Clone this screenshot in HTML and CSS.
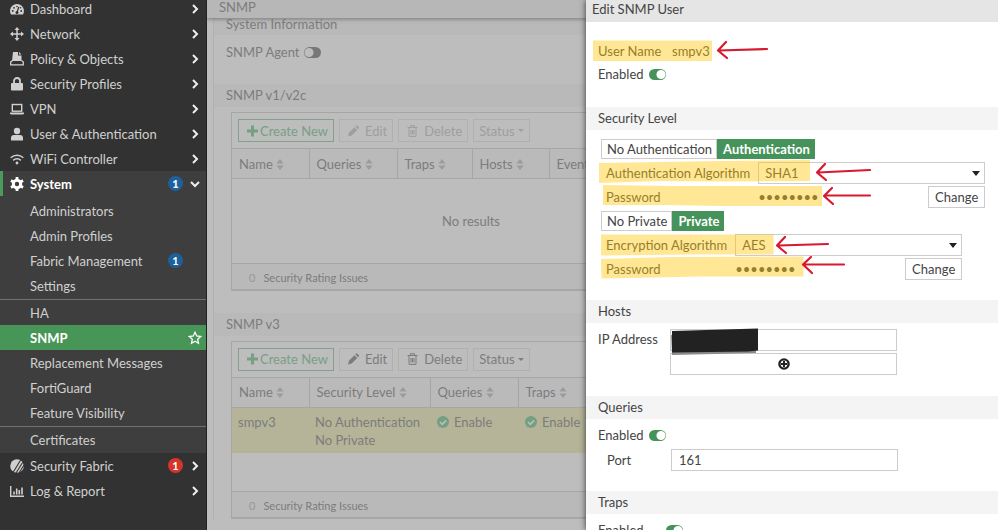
FILE: index.html
```html
<!DOCTYPE html>
<html lang="en">
<head>
  <meta charset="UTF-8" />
  <meta name="viewport" content="width=device-width, initial-scale=1.0" />
  <title>SNMP - Edit SNMP User</title>
  <link rel="stylesheet" href="styles.css">
</head>
<body>
  <!-- Shared icons -->
  <svg class="defs" aria-hidden="true">
    <symbol id="chevron" viewBox="0 0 8 10"><path d="M2 1l4 4-4 4" fill="none" stroke="currentColor" stroke-width="2"/></symbol>
    <symbol id="sort" viewBox="0 0 8 12"><path d="M4 0l4 5H0zM4 12L0 7h8z" fill="currentColor"/></symbol>
    <symbol id="plus" viewBox="0 0 11 11"><path d="M4 0h3v4h4v3H7v4H4V7H0V4h4z" fill="currentColor"/></symbol>
    <symbol id="pencil" viewBox="0 0 12 12"><path d="M0 12l1-4 6-6 3 3-6 6zM8 1l1-1h1l2 2v1l-1 1z" fill="currentColor"/></symbol>
    <symbol id="trash" viewBox="0 0 10 12"><path d="M0 2.5h10M3 2.500V.7h4v1.800M1.500 3v8.400h7V3M3.500 5v4.500M5 5v4.500M6.500 5v4.500" fill="none" stroke="currentColor"/></symbol>
    <symbol id="check" viewBox="0 0 12 12"><circle cx="6" cy="6" r="6" fill="currentColor"/><path d="M3 6l2.300 2.300L9.200 4.300" fill="none" stroke="#bcbcbc" stroke-width="1.700"/></symbol>
  </svg>

  <div class="app">
    <!-- Sidebar -->
    <nav class="sidebar">
      <ul class="menu">
        <li><a href="#" class="item">
          <svg class="icon" viewBox="0 0 14 14"><path d="M7 2a7 7 0 0 0-6 10.500h12A7 7 0 0 0 7 2z" fill="currentColor"/><g fill="#323232"><circle cx="2.800" cy="9" r=".9"/><circle cx="4" cy="5.800" r=".9"/><circle cx="11.200" cy="9" r=".9"/><circle cx="10.500" cy="5.800" r=".8"/><circle cx="7" cy="4.500" r=".8"/><circle cx="7" cy="10.500" r="1.500"/></g><path d="M7 10.500L8.800 5" stroke="#323232" stroke-width="1.200"/></svg>
          <span>Dashboard</span><svg class="arrow"><use href="#chevron"/></svg></a></li>
        <li><a href="#" class="item">
          <svg class="icon" viewBox="0 0 14 14"><path d="M7 1v12M1 7h12" stroke="currentColor" stroke-width="1.500"/><path d="M7 0l2.500 3h-5zM7 14l-2.500-3h5zM0 7l3-2.500v5zM14 7l-3 2.500v-5z" fill="currentColor"/></svg>
          <span>Network</span><svg class="arrow"><use href="#chevron"/></svg></a></li>
        <li><a href="#" class="item">
          <svg class="icon" viewBox="0 0 14 14"><path d="M3 0h5v3.500h3.500V9H2z" fill="currentColor"/><path d="M9 0l2.500 2.500H9z" fill="currentColor"/><path d="M2.500 8.500L.7 10v2.800h12.600V10l-1.800-1.500" fill="none" stroke="currentColor" stroke-width="1.300"/></svg>
          <span>Policy &amp; Objects</span><svg class="arrow"><use href="#chevron"/></svg></a></li>
        <li><a href="#" class="item">
          <svg class="icon" viewBox="0 0 14 14"><rect x="1" y="6" width="12" height="7.500" rx="1" fill="currentColor"/><path d="M4 6.500V4a3 3 0 0 1 6 0v2.500" fill="none" stroke="currentColor" stroke-width="1.800"/></svg>
          <span>Security Profiles</span><svg class="arrow"><use href="#chevron"/></svg></a></li>
        <li><a href="#" class="item">
          <svg class="icon" viewBox="0 0 14 14"><rect x="2.300" y="2.500" width="9.400" height="6.700" fill="none" stroke="currentColor" stroke-width="1.400"/><path d="M0 10.500h14v1l-1 1H1l-1-1z" fill="currentColor"/></svg>
          <span>VPN</span><svg class="arrow"><use href="#chevron"/></svg></a></li>
        <li><a href="#" class="item">
          <svg class="icon" viewBox="0 0 14 14"><circle cx="7" cy="4" r="3.200" fill="currentColor"/><path d="M1 13.500V11a3 3 0 0 1 3-3h6a3 3 0 0 1 3 3v2.500z" fill="currentColor"/></svg>
          <span>User &amp; Authentication</span><svg class="arrow"><use href="#chevron"/></svg></a></li>
        <li><a href="#" class="item">
          <svg class="icon" viewBox="0 0 14 14"><path d="M.7 5.800a9 9 0 0 1 12.600 0M3.200 8.400a5.400 5.400 0 0 1 7.600 0" fill="none" stroke="currentColor" stroke-width="1.500"/><circle cx="7" cy="11" r="1.400" fill="currentColor"/></svg>
          <span>WiFi Controller</span><svg class="arrow"><use href="#chevron"/></svg></a></li>
        <li class="open"><a href="#" class="item current">
          <svg class="icon" viewBox="0 0 14 14"><circle cx="7" cy="7" r="3.700" fill="none" stroke="currentColor" stroke-width="3"/><path d="M7 0v3M7 11v3M1 3.500l2.500 1.500M10.500 9l2.500 1.500M1 10.500L3.500 9M10.500 5L13 3.500" stroke="currentColor" stroke-width="2.800"/></svg>
          <span>System</span><b class="count">1</b><svg class="arrow down"><use href="#chevron"/></svg></a>
          <ul class="submenu">
            <li><a href="#" class="item">Administrators</a></li>
            <li><a href="#" class="item">Admin Profiles</a></li>
            <li><a href="#" class="item"><span>Fabric Management</span><b class="count">1</b><i class="arrow"></i></a></li>
            <li><a href="#" class="item">Settings</a></li>
            <li class="divided"><a href="#" class="item">HA</a></li>
            <li><a href="#" class="item active"><span>SNMP</span>
              <svg class="star" viewBox="0 0 14 14"><path d="M7 1.300l1.700 3.700 4 .5-3 2.700.8 4L7 10.200l-3.500 2 .8-4-3-2.700 4-.5z" fill="none" stroke="currentColor" stroke-width="1.300"/></svg></a></li>
            <li><a href="#" class="item">Replacement Messages</a></li>
            <li><a href="#" class="item">FortiGuard</a></li>
            <li><a href="#" class="item">Feature Visibility</a></li>
            <li class="divided"><a href="#" class="item">Certificates</a></li>
          </ul>
        </li>
        <li><a href="#" class="item">
          <svg class="icon" viewBox="0 0 14 14"><circle cx="7" cy="7" r="6.800" fill="currentColor"/><path d="M3 13.500L11 .5M6 14L13.500 2M9 14l5-8" stroke="#323232" stroke-width="1.100"/></svg>
          <span>Security Fabric</span><b class="count red">1</b><svg class="arrow"><use href="#chevron"/></svg></a></li>
        <li><a href="#" class="item">
          <svg class="icon" viewBox="0 0 14 14"><path d="M.7 2v10.300H14" fill="none" stroke="currentColor" stroke-width="1.400"/><path d="M4 10.500v-3M6.700 10.500v-6M9.300 10.500V6M12 10.500v-7" stroke="currentColor" stroke-width="1.600"/></svg>
          <span>Log &amp; Report</span><svg class="arrow"><use href="#chevron"/></svg></a></li>
      </ul>
    </nav>

    <!-- SNMP page, dimmed while the drawer is open -->
    <main class="page">
      <h1 class="page-title">SNMP</h1>
      <div class="page-body">
        <h2 class="band first">System Information</h2>
        <div class="agent">
          <label for="agent">SNMP Agent</label>
          <input type="checkbox" class="toggle" id="agent">
        </div>

        <h2 class="band">SNMP v1/v2c</h2>
        <div class="grid-box">
          <div class="toolbar">
            <button class="create"><svg><use href="#plus"/></svg>Create New</button>
            <button disabled><svg><use href="#pencil"/></svg>Edit</button>
            <button disabled><svg><use href="#trash"/></svg>Delete</button>
            <button class="status" disabled>Status</button>
          </div>
          <table>
            <colgroup><col class="c-name"><col class="c-queries"><col class="c-traps"><col class="c-name"><col></colgroup>
            <thead>
              <tr>
                <th>Name <svg><use href="#sort"/></svg></th>
                <th>Queries <svg><use href="#sort"/></svg></th>
                <th>Traps <svg><use href="#sort"/></svg></th>
                <th>Hosts <svg><use href="#sort"/></svg></th>
                <th>Events <svg><use href="#sort"/></svg></th>
              </tr>
            </thead>
            <tbody><tr><td colspan="5" class="empty">No results</td></tr></tbody>
          </table>
          <div class="rating"><span>0</span>Security Rating Issues</div>
        </div>

        <h2 class="band">SNMP v3</h2>
        <div class="grid-box">
          <div class="toolbar">
            <button class="create"><svg><use href="#plus"/></svg>Create New</button>
            <button><svg><use href="#pencil"/></svg>Edit</button>
            <button><svg><use href="#trash"/></svg>Delete</button>
            <button class="status">Status</button>
          </div>
          <table class="users">
            <colgroup><col class="c-name"><col class="c-level"><col class="c-queries"><col></colgroup>
            <thead>
              <tr>
                <th>Name <svg><use href="#sort"/></svg></th>
                <th>Security Level <svg><use href="#sort"/></svg></th>
                <th>Queries <svg><use href="#sort"/></svg></th>
                <th>Traps <svg><use href="#sort"/></svg></th>
              </tr>
            </thead>
            <tbody>
              <tr class="selected">
                <td>smpv3</td>
                <td>No Authentication<br>No Private</td>
                <td><svg><use href="#check"/></svg>Enable</td>
                <td><svg><use href="#check"/></svg>Enable</td>
              </tr>
            </tbody>
          </table>
          <div class="rating"><span>0</span>Security Rating Issues</div>
        </div>
      </div>
    </main>

    <!-- Edit drawer -->
    <aside class="drawer">
      <h2 class="drawer-title">Edit SNMP User</h2>
      <form>
        <div class="rows user">
          <div class="row"><span class="name">User Name</span><span>smpv3</span></div>
          <div class="row">
            <label for="enabled">Enabled</label>
            <input type="checkbox" class="toggle" id="enabled" checked>
          </div>
        </div>

        <h3>Security Level</h3>
        <div class="security">
          <div class="switch">
            <button type="button">No Authentication</button><button type="button" class="on">Authentication</button>
          </div>
          <div class="fields">
            <label for="auth">Authentication Algorithm</label>
            <span class="select"><select id="auth"><option>SHA1</option></select></span>
            <label for="authPass">Password</label>
            <span class="secret"><input type="password" id="authPass" value="password" readonly><button type="button">Change</button></span>
          </div>
          <div class="switch">
            <button type="button">No Private</button><button type="button" class="on">Private</button>
          </div>
          <div class="fields">
            <label for="enc">Encryption Algorithm</label>
            <span class="select"><select id="enc"><option>AES</option></select></span>
            <label for="encPass">Password</label>
            <span class="secret"><input type="password" id="encPass" value="password" readonly><button type="button">Change</button></span>
          </div>
        </div>

        <h3>Hosts</h3>
        <div class="hosts">
          <label for="ip">IP Address</label>
          <div class="host-list">
            <input type="text" class="text" id="ip">
            <button type="button" aria-label="Add host">
              <svg viewBox="0 0 12 12"><circle cx="6" cy="6" r="4.600" fill="none" stroke="currentColor" stroke-width="2.400"/><path d="M6 3v6M3 6h6" stroke="currentColor" stroke-width="2"/></svg>
            </button>
          </div>
        </div>

        <h3>Queries</h3>
        <div class="rows queries">
          <div class="row">
            <label for="queries">Enabled</label>
            <input type="checkbox" class="toggle" id="queries" checked>
          </div>
          <div class="row port">
            <label for="port">Port</label>
            <input type="text" class="text" id="port" value="161">
          </div>
        </div>

        <h3>Traps</h3>
        <div class="rows traps">
          <div class="row">
            <label for="traps">Enabled</label>
            <input type="checkbox" class="toggle" id="traps" checked>
          </div>
        </div>
      </form>

      <!-- Marker strokes and arrows -->
      <svg class="notes" width="412" height="530" viewBox="586 0 412 530" aria-hidden="true">
        <g fill="#fec80e" fill-opacity=".44">
          <path d="M593 40.500h119v20.500H593z"/>
          <path d="M599 163l60-1 60-1 91-1v21l-91 .5-60-.5-60 2z"/>
          <path d="M603 185l70 1 149 0v20l-100 0-60-1-59 0z"/>
          <path d="M601 234.500h172.500v20l-80 0-92.500 1z"/>
          <path d="M601 259l70-2 132.500-.5v20l-100 0-102 2z"/>
        </g>
        <g fill="none" stroke="#d8192f" stroke-width="2.200" stroke-linecap="round" stroke-linejoin="round">
          <path d="M767 49l-48 1.500M726 42l-8 8.500 9 7.500"/>
          <path d="M870 170l-52 2.500M825 164l-8 8.500 9 7.500"/>
          <path d="M870 195.500h-45M832 188l-8 8 9 8"/>
          <path d="M828 244l-49 1.500M785 237l-8 8.500 9 7.500"/>
          <path d="M844 264.500h-40M811 257l-8 7.500 9 8.500"/>
        </g>
        <path d="M671 335h2v17l83-2v3l-84 2z" fill="#8c8a8c"/>
        <path d="M672 331l86-2.500v22l-10 1-76 1z" fill="#222"/>
      </svg>
    </aside>
  </div>
</body>
</html>
```

FILE: styles.css
```css
* {
  box-sizing: border-box;
}

body {
  font-family: Lato, "Liberation Sans", sans-serif;
  font-size: 13px;
  line-height: 18px;
  margin: 0;
  color: #444;
}

h1, h2, h3 {
  font-size: 13px;
  font-weight: normal;
  margin: 0;
}

ul {
  list-style: none;
  margin: 0;
  padding: 0;
}

button, input, select {
  font: inherit;
  color: inherit;
  margin: 0;
}

button {
  cursor: pointer;
}

label {
  white-space: nowrap;
}

.defs {
  display: none;
}

.app {
  position: relative;
  display: flex;
  height: 100vh;
  overflow: hidden;
}

/* Sidebar */
.sidebar {
  flex: 0 0 207px;
  background: #323232;
  color: #d0d0d0;
  border-right: 1px solid #222;
}

.menu {
  margin-top: -4px;
}

.item {
  display: flex;
  align-items: center;
  height: 25px;
  padding: 0 7px 0 10px;
  color: inherit;
  text-decoration: none;
}

.item span {
  flex: 1;
}

.icon {
  width: 14px;
  height: 14px;
  margin-right: 6px;
}

.arrow {
  width: 8px;
  height: 10px;
  margin-left: 8px;
  color: #eee;
}

.arrow.down {
  transform: rotate(90deg);
}

.open {
  background: #3e3e3e;
}

.current {
  color: #fff;
  font-weight: bold;
  border-left: 3px solid #4a9a5b;
  padding-left: 7px;
}

.count {
  width: 15px;
  height: 15px;
  border-radius: 50%;
  background: #1c609c;
  color: #fff;
  font-size: 11px;
  line-height: 15px;
  text-align: center;
}

.count.red {
  background: #d6352b;
}

.submenu {
  padding: 2px 0 1px;
}

.submenu .item {
  padding-left: 30px;
}

.submenu .divided {
  border-top: 1px solid #707070;
  margin-top: 1px;
}

.submenu .active {
  background: #489558;
  color: #fff;
  font-weight: bold;
  padding-right: 4px;
}

.star {
  width: 14px;
  height: 14px;
}

/* Dimmed page */
.page {
  flex: 1;
  min-width: 0;
  background: #bdbdbd;
  color: #7c7c7c;
  overflow: hidden;
}

.page-title {
  position: relative;
  height: 18px;
  line-height: 14px;
  padding-left: 12px;
  background: #b7b7b7;
  box-shadow: 0 1px 4px #777;
}

.page-body {
  margin-left: 6px;
  border-left: 1px solid #b0b0b0;
}

.band {
  height: 23px;
  line-height: 23px;
  padding-left: 12px;
  background: #b9b9b9;
}

.band.first {
  height: 17px;
  line-height: 13px;
}

.agent {
  display: flex;
  align-items: center;
  gap: 4px;
  padding: 8px 12px 23px;
}

.toggle {
  appearance: none;
  width: 17px;
  height: 11px;
  border-radius: 6px;
  background: radial-gradient(circle at 5px 50%, #bdbdbd 4px, #777 5px);
}

.toggle:checked {
  background: radial-gradient(circle at 12px 50%, #fff 4px, #45935a 5px);
}

.grid-box {
  width: 480px;
  margin: 5px 0 22px 17px;
  border: 1px solid #a6a6a6;
  border-bottom-width: 2px;
}

.toolbar {
  display: flex;
  gap: 5px;
  padding: 6px;
}

.toolbar button {
  display: flex;
  align-items: center;
  gap: 6px;
  height: 23px;
  padding: 0 5px 0 8px;
  border: 1px solid #b0b0b0;
  background: none;
}

.toolbar button:disabled {
  color: #9e9e9e;
}

.toolbar svg {
  width: 11px;
  height: 12px;
}

.toolbar .create {
  gap: 2px;
  color: #76a083;
  border-color: #83a08b;
}

.toolbar .status {
  gap: 3px;
  padding: 0 5px;
}

.status::after {
  content: "";
  border: 3px solid transparent;
  border-top-color: currentColor;
  border-bottom: 0;
}

table {
  width: 100%;
  table-layout: fixed;
  border-collapse: collapse;
}

.c-name {
  width: 77px;
}

.c-queries {
  width: 88px;
}

.c-traps {
  width: 75px;
}

.c-level {
  width: 121px;
}

th {
  height: 30px;
  padding: 0 7px;
  font-weight: normal;
  text-align: left;
  white-space: nowrap;
  border: 1px solid #a6a6a6;
  border-width: 1px 0 1px 1px;
  background: #bababa;
}

th:first-child {
  border-left: 0;
}

th svg {
  width: 8px;
  height: 11px;
  vertical-align: -1px;
  color: #9c9c9c;
}

td {
  padding: 5px 6px 4px;
  vertical-align: top;
}

td svg {
  width: 12px;
  height: 12px;
  margin: 0 5px 0 1px;
  vertical-align: -1px;
  color: #73a083;
}

.empty {
  height: 84px;
  text-align: center;
  vertical-align: middle;
}

.selected {
  background: #b5b498;
}

.users {
  margin-bottom: 38px;
}

.rating {
  height: 26px;
  line-height: 27px;
  padding-left: 17px;
  font-size: 11px;
  border-top: 1px solid #a6a6a6;
  background: #b9b9b9;
}

.rating span {
  margin-right: 8px;
  color: #989898;
}

/* Drawer over the page */
.drawer {
  position: absolute;
  top: 0;
  right: 0;
  bottom: 0;
  left: 586px;
  overflow: hidden;
  background: #fff;
  box-shadow: 0 0 6px #333;
}

.drawer-title {
  height: 22px;
  line-height: 18px;
  padding-left: 6px;
  background: #e5e5e5;
}

.drawer h3 {
  height: 23px;
  line-height: 23px;
  padding-left: 12px;
  background: #f4f4f4;
}

.rows {
  display: flex;
  flex-direction: column;
  gap: 5px;
}

.row {
  display: flex;
  align-items: center;
  gap: 5px;
}

.user {
  padding: 20px 12px 24px;
}

.user .name {
  width: 69px;
}

.security {
  display: flex;
  flex-direction: column;
  gap: 3px;
  padding: 9px 12px 20px 15px;
}

.switch {
  display: flex;
}

.switch button {
  height: 20px;
  line-height: 18px;
  padding: 0 4px 0 5px;
  border: 1px solid #ccc;
  background: #fff;
}

.switch .on {
  border-color: #45935a;
  background: #45935a;
  color: #fff;
  font-weight: bold;
}

.fields {
  display: grid;
  grid-template-columns: auto 227px;
  justify-content: start;
  align-items: center;
  gap: 2px 8px;
  padding-left: 5px;
}

.select {
  position: relative;
}

.select select {
  display: block;
  appearance: none;
  width: 100%;
  height: 22px;
  padding: 0 6px;
  border: 1px solid #ccc;
  border-radius: 0;
  background: #fff;
}

.select::after {
  content: "";
  position: absolute;
  top: 9px;
  right: 5px;
  border: 4px solid transparent;
  border-top: 5px solid #222;
  border-bottom: 0;
}

.secret {
  display: flex;
  justify-content: space-between;
}

.secret input {
  width: 100px;
  padding: 0;
  border: 0;
  background: none;
}

.secret button {
  height: 22px;
  padding: 0 6px;
  border: 1px solid #ccc;
  background: #fff;
}

.text {
  width: 227px;
  height: 22px;
  padding: 0 7px;
  border: 1px solid #ccc;
}

.hosts {
  display: flex;
  gap: 5px;
  padding: 6px 12px 21px;
}

.hosts label {
  width: 67px;
  line-height: 20px;
}

.host-list {
  display: flex;
  flex-direction: column;
  gap: 2px;
}

.host-list button {
  height: 22px;
  padding: 0;
  border: 1px solid #ccc;
  background: #fff;
  color: #222;
}

.host-list svg {
  display: block;
  width: 12px;
  height: 12px;
  margin: 0 auto;
}

.queries {
  padding: 7px 12px 20px;
}

.port {
  padding-left: 9px;
}

.port label {
  width: 59px;
}

.traps {
  padding: 7px 12px;
}

.traps .row {
  gap: 22px;
}

.notes {
  position: absolute;
  top: 0;
  left: 0;
}
```
